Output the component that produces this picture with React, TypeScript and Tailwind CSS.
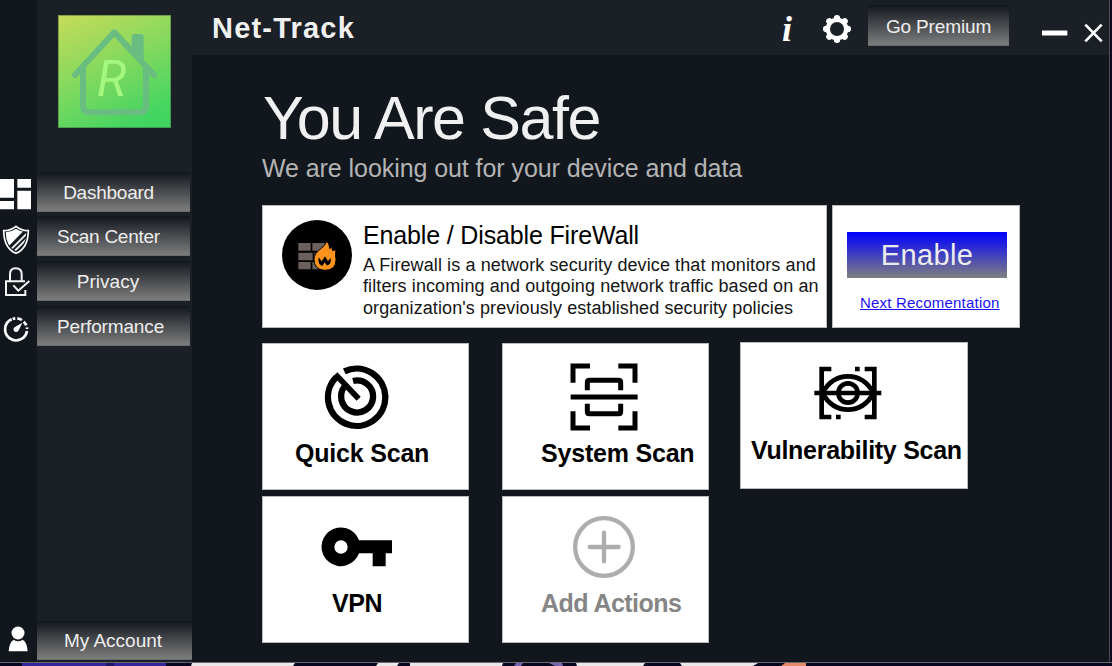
import React from "react";

function LogoIcon() {
  return (
    <svg className="block h-[113px] w-[113px]" viewBox="174 45 339 339">
      <defs>
        <linearGradient id="logo" x1="0" y1="0" x2="0.5" y2="1.05">
          <stop offset="0" stopColor="#c8db58" />
          <stop offset="0.5" stopColor="#86d95e" />
          <stop offset="1" stopColor="#43d562" />
        </linearGradient>
      </defs>
      <rect x="174" y="45" width="339" height="339" fill="url(#logo)" />
      <rect x="175.5" y="46.5" width="336" height="336" fill="none" stroke="#3a5a3c" strokeOpacity="0.45" strokeWidth="3" />
      <g fill="none" stroke="#69bd80" strokeWidth="18" strokeLinejoin="round" strokeLinecap="round">
        <path d="M225 225 L343 97 L462 225" />
        <path d="M249 200 V318 Q249 337 268 337 H419 Q438 337 438 318 V200" strokeLinecap="butt" />
      </g>
      <path d="M395 150 V110 Q395 102 403 102 H423 Q431 102 431 110 V194 Z" fill="#69bd80" />
      <text x="291" y="287" fontSize="147" fontStyle="italic" fontFamily="Roboto, sans-serif" fill="#a5f87f" textLength="88" lengthAdjust="spacingAndGlyphs">
        R
      </text>
    </svg>
  );
}

function DashboardIcon() {
  return (
    <svg className="block h-[44px] w-[37px]" viewBox="0 21 111 132" fill="#fff">
      <path d="M0 42H42V98H0zM52 42H93V68H52zM0 108H42V133H0zM52 77H93V133H52z" />
    </svg>
  );
}

function ShieldIcon() {
  return (
    <svg className="block h-[44px] w-[37px]" viewBox="0 153 111 132">
      <clipPath id="shield">
        <path d="M48 191 Q34 201 17 202 Q18 244 48 259 Q78 244 79 202 Q62 201 48 191Z" />
      </clipPath>
      <path d="M48 184 Q32 197 11 197 Q12 250 48 265 Q84 250 85 197 Q64 197 48 184Z" fill="#14191f" stroke="#fff" strokeWidth="5" />
      <g clipPath="url(#shield)">
        <path d="M10 180 H88 L20 250 Z" fill="#fff" />
        <path d="M84 202 L24 262 M86 216 L34 268 M90 230 L42 278" stroke="#e8e8e8" strokeWidth="6" />
      </g>
    </svg>
  );
}

function LockIcon() {
  return (
    <svg className="block h-[44px] w-[37px]" viewBox="0 285 111 132" fill="none" stroke="#f4f4f4" strokeWidth="6">
      <path d="M30 349 V327 Q30 310 47 310 Q65 310 65 327 V349" />
      <path d="M75 349 H18 V390 H76 V375" />
      <path d="M40 361 L55 377 L88 348" />
    </svg>
  );
}

function GaugeIcon() {
  return (
    <svg className="block h-[44px] w-[37px]" viewBox="0 417 111 132" fill="none" stroke="#fff" strokeWidth="8">
      <path d="M81 498 A33 33 0 1 1 35 463" />
      <path d="M38 462 A33 33 0 0 1 46 460 M52 460 A33 33 0 0 1 66 465 M71 470 A33 33 0 0 1 79 481" />
      <path d="M81 487 A33 33 0 0 1 81 492" />
      <path d="M67 473 L55 498 Q48 504 42 498 Q38 491 45 486Z" fill="#fff" stroke="none" />
    </svg>
  );
}

function UserIcon() {
  return (
    <svg className="block h-[39px] w-[37px]" viewBox="0 33 111 117" fill="#fff">
      <circle cx="54" cy="69" r="19.5" />
      <path d="M26 124 Q27 98 41 89 Q54 98 68 89 Q82 98 83 124Z" />
    </svg>
  );
}

function GearIcon() {
  const teeth = [0, 45, 90, 135, 180, 225, 270, 315];
  return (
    <svg className="block h-[30px] w-[30px]" viewBox="186 42 90 90">
      {teeth.map((a) => (
        <circle key={a} cx="231" cy="54.5" r="9.5" fill="#fff" transform={`rotate(${a} 231 87)`} />
      ))}
      <circle cx="231" cy="87" r="27.5" fill="none" stroke="#fff" strokeWidth="13" />
    </svg>
  );
}

function FirewallIcon() {
  return (
    <svg className="block h-[70px] w-[70px]" viewBox="81 60 210 210">
      <circle cx="186" cy="165" r="105" fill="#000" />
      <path
        d="M130 129H167V152H130zM172 129H212V152H172zM130 158H173V181H130zM178 158H192V181H178zM130 186H167V208H130zM172 186H200V208H172z"
        fill="#6b605b"
      />
      <path d="M216 123 Q224 134 224 146 L231 140 L232 151 L243 150 Q240 165 243 178 Q244 211 208 211 Q177 208 177 178 Q178 160 194 149 Q210 138 216 123Z" fill="#ff931e" stroke="#000" strokeWidth="3" />
      <path d="M191 172 Q186 198 208 198 Q232 196 227 174 L219 183 L210 169 L200 184Z" fill="#000" />
      <path d="M202 199 L209 187 L217 199Z" fill="#ff931e" />
    </svg>
  );
}

function RadarIcon() {
  return (
    <svg className="block h-[66px] w-[66px]" viewBox="206 79 198 198" fill="none" stroke="#000" strokeWidth="19">
      <path d="M267 101 A86 86 0 1 1 242 119" />
      <path d="M293 130 A48 48 0 1 1 269 145" />
      <path d="M240 110 L310 183" strokeWidth="17" />
    </svg>
  );
}

function SystemIcon() {
  return (
    <svg className="block h-[68px] w-[68px]" viewBox="225 76 204 204" fill="none" stroke="#000" strokeWidth="15">
      <path d="M234 135V85H285M370 85H420V135M420 221V271H370M285 271H234V221" />
      <path d="M227 178H428" />
      <path d="M277 158V134Q277 128 283 128H371Q377 128 377 134V158M277 198V222Q277 228 283 228H371Q377 228 377 222V198" />
    </svg>
  );
}

function EyeScanIcon() {
  return (
    <svg className="block h-[54px] w-[68px]" viewBox="237 86 204 162" fill="none" stroke="#000" strokeWidth="14">
      <path d="M289 95H260V239H289M389 95H418V239H389" />
      <path d="M360 95H374M303 239H317" />
      <path d="M238 167H439" />
      <path d="M262 167Q290 117 339 117Q388 117 416 167Q388 217 339 217Q290 217 262 167Z" />
      <circle cx="339" cy="167" r="29" />
    </svg>
  );
}

function KeyIcon() {
  return (
    <svg className="block h-[40px] w-[72px]" viewBox="197 112 216 120">
      <path
        fillRule="evenodd"
        d="M311 152H410V191H391V230H352V191H311A58 58 0 1 1 311 152ZM257 152A20 20 0 1 0 257 192A20 20 0 1 0 257 152Z"
      />
    </svg>
  );
}

function AddIcon() {
  return (
    <svg className="block h-[64px] w-[64px]" viewBox="951 76 192 192" fill="none" stroke="#adadad" strokeWidth="13">
      <circle cx="1047" cy="172" r="86.5" />
      <path d="M1004 172H1091M1047 129V215" strokeLinecap="round" />
    </svg>
  );
}

type NavProps = { label: string; className: string };

function NavButton({ label, className }: NavProps) {
  return (
    <button
      className={`block shrink-0 whitespace-nowrap border-b border-[#6a6b6d] bg-linear-to-b/srgb from-[#12171e] to-[#7d7d7d] pt-[3px] text-[19px] text-[#eeeeee] ${className}`}
    >
      {label}
    </button>
  );
}

type TileProps = { label: string; icon: React.ReactNode; className: string; labelClass: string };

function Tile({ label, icon, className, labelClass }: TileProps) {
  return (
    <div className={`flex flex-col items-start border border-[#b9babc] bg-white ${className}`}>
      {icon}
      <div className={`whitespace-nowrap text-[25px] leading-[30px] font-bold ${labelClass}`}>{label}</div>
    </div>
  );
}

function Desktop() {
  return (
    <svg className="block h-[3px] w-[1112px]" viewBox="0 0 1112 3" preserveAspectRatio="none">
      <rect width="1112" height="3" fill="#07051f" />
      <path d="M22 0H166V3H22z" fill="#34259a" />
      <path d="M106 0H114V3H106z" fill="#1d1568" />
      <path d="M192 0H295L293 3H191zM378 0H399L397 3H376zM410 0H503L502 3H410zM576 0H645L643 3H577zM680 0H758L753 3H682z" fill="#e9e7e8" />
      <path d="M516 0H523L521 3H514zM549 0H562L563 3H555z" fill="#7563ad" />
      <path d="M785 0H806V3H781z" fill="#e58a68" />
    </svg>
  );
}

export default function App() {
  return (
    <div className="flex h-[666px] w-[1112px] flex-col overflow-hidden bg-[#12171e] font-['Liberation_Sans',Arial,sans-serif]">
      <div className="flex h-[662px]">
        <aside className="flex w-[37px] shrink-0 flex-col justify-between pt-[172px] pb-[2px]">
          <div>
            <DashboardIcon />
            <ShieldIcon />
            <LockIcon />
            <GaugeIcon />
          </div>
          <UserIcon />
        </aside>

        <nav className="flex w-[155px] shrink-0 flex-col bg-[#1b1f26]">
          <div className="h-[172px] pt-[15px] pl-[21px]">
            <LogoIcon />
          </div>
          <NavButton label="Dashboard" className="h-[40px] w-[153px] pr-[10px] tracking-[-0.25px]" />
          <NavButton label="Scan Center" className="mt-[4px] h-[40px] w-[153px] pr-[10px] tracking-[-0.25px]" />
          <NavButton label="Privacy" className="mt-[5px] h-[40px] w-[153px] pr-[11px]" />
          <NavButton label="Performance" className="mt-[5px] h-[40px] w-[153px] pr-[6px] tracking-[-0.15px]" />
          <NavButton label="My Account" className="mt-auto mb-[2px] h-[39px] w-[155px] pr-[3px]" />
        </nav>

        <main className="flex w-[917px] shrink-0 flex-col">
          <header className="flex h-[55px] items-start bg-[#1b1f26] pl-[20px]">
            <h1 className="mt-[12px] w-[569px] whitespace-nowrap text-[29px] leading-[32px] font-bold tracking-[1.2px] text-[#f0f0f0]">Net-Track</h1>
            <span className="mt-[9px] w-[38px] pl-px font-['Liberation_Serif',serif] text-[36px] leading-[40px] font-bold italic text-white">i</span>
            <div className="mt-[14px] ml-[3px]">
              <GearIcon />
            </div>
            <button className="mt-[5px] ml-[16px] h-[41px] w-[141px] border-b border-[#66676a] bg-linear-to-b/srgb from-[#12171e] to-[#7d7d7d] pt-[4px] text-[19px] tracking-[-0.15px] whitespace-nowrap text-[#eeeeee]">
              Go Premium
            </button>
            <svg className="mt-[22px] ml-[32px] block h-[22px] w-[64px]" viewBox="843 66 192 66" stroke="#fff" fill="none">
              <path d="M846 99H922" strokeWidth="15" />
              <path d="M976 74L1025 124M1025 74L976 124" strokeWidth="8" />
            </svg>
          </header>

          <section className="pt-[31px] pl-[70px]">
            <h2 className="whitespace-nowrap pl-px text-[61px] leading-[64px] tracking-[-1.4px] text-[#f0f0f0]">You Are Safe</h2>
            <p className="mt-[2px] whitespace-nowrap text-[25px] leading-[32px] tracking-[-0.07px] text-[#b4b4b4]">
              We are looking out for your device and data
            </p>

            <div className="mt-[21px] flex gap-[5px]">
              <div className="flex h-[123px] w-[565px] border border-[#b9babc] bg-white pt-[14px] pl-[19px]">
                <FirewallIcon />
                <div className="ml-[11px] text-black">
                  <h3 className="whitespace-nowrap text-[25px] leading-[30px] tracking-[-0.15px]">Enable / Disable FireWall</h3>
                  <p className="mt-[5px] whitespace-nowrap text-[18px] leading-[21.4px] tracking-[0.1px] text-[#141414]">
                    A Firewall is a network security device that monitors and
                    <br />
                    filters incoming and outgoing network traffic based on an
                    <br />
                    organization's previously established security policies
                  </p>
                </div>
              </div>
              <div className="flex h-[123px] w-[188px] flex-col items-start border border-[#b9babc] bg-white pt-[26px] pl-[14px]">
                <button className="h-[46px] w-[160px] bg-linear-to-b/srgb from-[#0000ff] to-[#808080] text-[29px] leading-[45px] tracking-[0.4px] text-[#ececec]">
                  Enable
                </button>
                <a className="mt-[15px] ml-[13px] whitespace-nowrap text-[15px] leading-[20px] tracking-[0.2px] text-[#1a10f5] underline">Next Recomentation</a>
              </div>
            </div>

            <div className="mt-[14px] flex h-[147px] items-start">
              <Tile label="Quick Scan" icon={<RadarIcon />} className="mt-px h-[147px] w-[207px] pt-[20px] pl-[61px]" labelClass="mt-[8px] -ml-[29px] tracking-[-0.2px] text-black" />
              <Tile label="System Scan" icon={<SystemIcon />} className="mt-px ml-[33px] h-[147px] w-[207px] pt-[19px] pl-[67px]" labelClass="mt-[7px] -ml-[29px] tracking-[-0.2px] text-black" />
              <Tile
                label="Vulnerability Scan"
                icon={<EyeScanIcon />}
                className="ml-[31px] h-[147px] w-[228px] pt-[23px] pl-[73px]"
                labelClass="mt-[15px] -ml-[63px] tracking-[-0.28px] text-black"
              />
            </div>

            <div className="mt-[7px] flex">
              <Tile label="VPN" icon={<KeyIcon />} className="h-[147px] w-[207px] pt-[30px] pl-[58px]" labelClass="mt-[21px] ml-[11px] tracking-[-0.4px] text-black" />
              <Tile
                label="Add Actions"
                icon={<AddIcon />}
                className="ml-[33px] h-[147px] w-[207px] pt-[18px] pl-[69px]"
                labelClass="mt-[9px] -ml-[31px] tracking-[-0.55px] text-[#858585]"
              />
            </div>
          </section>
        </main>
        <div className="w-px bg-[#4c4c50]" />
        <div className="w-[2px] bg-[#0d0a20]" />
      </div>
      <div className="h-px bg-[#6a696c]" />
      <Desktop />
    </div>
  );
}
